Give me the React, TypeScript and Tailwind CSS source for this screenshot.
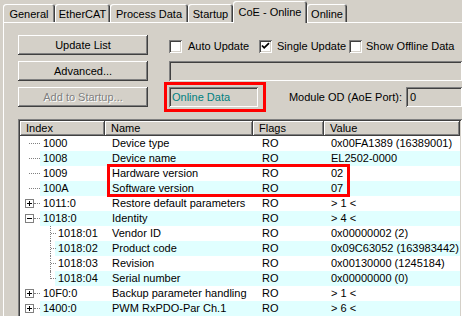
import React from 'react';

const sunken =
  'shadow-[inset_1px_1px_0_#808080,inset_-1px_-1px_0_#ffffff,inset_2px_2px_0_#404040,inset_-2px_-2px_0_#d4d0c8]';
const raised =
  'shadow-[inset_-1px_-1px_0_#404040,inset_1px_1px_0_#ffffff,inset_-2px_-2px_0_#808080]';

type Row = {
  idx: string;
  name: string;
  value: string;
  level?: number;
  box?: '+' | '-';
  last?: boolean;
};

const rows: Row[] = [
  { idx: '1000', name: 'Device type', value: '0x00FA1389 (16389001)' },
  { idx: '1008', name: 'Device name', value: 'EL2502-0000' },
  { idx: '1009', name: 'Hardware version', value: '02' },
  { idx: '100A', name: 'Software version', value: '07' },
  { idx: '1011:0', name: 'Restore default parameters', value: '> 1 <', box: '+' },
  { idx: '1018:0', name: 'Identity', value: '> 4 <', box: '-' },
  { idx: '1018:01', name: 'Vendor ID', value: '0x00000002 (2)', level: 1 },
  { idx: '1018:02', name: 'Product code', value: '0x09C63052 (163983442)', level: 1 },
  { idx: '1018:03', name: 'Revision', value: '0x00130000 (1245184)', level: 1 },
  { idx: '1018:04', name: 'Serial number', value: '0x00000000 (0)', level: 1, last: true },
  { idx: '10F0:0', name: 'Backup parameter handling', value: '> 1 <', box: '+' },
  { idx: '1400:0', name: 'PWM RxPDO-Par Ch.1', value: '> 6 <', box: '+' },
];

const tabs = [
  { label: 'General', w: 'w-[52px]' },
  { label: 'EtherCAT', w: 'w-[55px]' },
  { label: 'Process Data', w: 'w-[78px]' },
  { label: 'Startup', w: 'w-[45px]' },
  { label: 'CoE - Online', w: 'w-[74px]', active: true },
  { label: 'Online', w: 'w-[40px]' },
];

function Checkbox({ checked }: { checked?: boolean }) {
  return (
    <div className={`w-[13px] h-[13px] bg-white shrink-0 ${sunken}`}>
      {checked && (
        <svg width="13" height="13" viewBox="0 0 13 13">
          <path d="M3 5.5 L5.2 7.8 L10 3.2" fill="none" stroke="#000" strokeWidth="1.8" />
        </svg>
      )}
    </div>
  );
}

function Button({ label, disabled }: { label: string; disabled?: boolean }) {
  return (
    <div
      className={`w-[130px] h-[20px] flex items-center justify-center bg-[#d4d0c8] ${raised} ${
        disabled ? 'text-[#808080] [text-shadow:1px_1px_0_#ffffff]' : 'text-black'
      }`}
    >
      {label}
    </div>
  );
}

function TreeCell({ row }: { row: Row }) {
  if (row.level === 1) {
    return (
      <div className="relative w-[35px] h-full shrink-0">
        <span
          className={`absolute left-[30px] top-0 border-l border-dotted border-[#808080] ${
            row.last ? 'h-[8px]' : 'h-full'
          }`}
        />
        <span className="absolute left-[31px] top-[7px] w-[5px] border-t border-dotted border-[#808080]" />
      </div>
    );
  }
  return (
    <div className="relative w-[20px] h-full shrink-0">
      {row.box ? (
        <>
          <svg className="absolute left-[5px] top-[3px]" width="9" height="9" viewBox="0 0 9 9">
            <rect x="0.5" y="0.5" width="8" height="8" fill="#fff" stroke="#808080" />
            <path d="M2 4.5h5" stroke="#000" />
            {row.box === '+' && <path d="M4.5 2v5" stroke="#000" />}
          </svg>
          <span className="absolute left-[14px] top-[7px] w-[6px] border-t border-dotted border-[#808080]" />
        </>
      ) : (
        <span className="absolute left-[9px] top-[7px] w-[11px] border-t border-dotted border-[#808080]" />
      )}
    </div>
  );
}

export default function App() {
  return (
    <div className="relative w-[462px] h-[316px] overflow-hidden bg-[#d4d0c8] text-[11px] leading-none text-black font-['Liberation_Sans',Arial,sans-serif]">
      {/* Tabs */}
      <div className="flex items-end h-[22px] pl-[3px]">
        {tabs.map((t) =>
          t.active ? (
            <div
              key={t.label}
              className={`${t.w} h-[22px] -mb-[1px] relative z-10 bg-[#d4d0c8] rounded-t-[3px] flex items-start justify-center pt-[6px] shadow-[inset_1px_1px_0_#ffffff,inset_-1px_0_0_#404040,inset_-2px_0_0_#808080]`}
            >
              {t.label}
            </div>
          ) : (
            <div
              key={t.label}
              className={`${t.w} h-[18px] bg-[#d4d0c8] rounded-t-[3px] flex items-start justify-center pt-[5px] shadow-[inset_1px_1px_0_#ffffff,inset_-1px_0_0_#404040,inset_-2px_0_0_#808080]`}
            >
              {t.label}
            </div>
          )
        )}
      </div>

      {/* Panel */}
      <div className="ml-[3px] border-t border-l border-white pl-[14px] pt-[12px] h-[400px]">
        <div className="flex">
          <div className="flex flex-col gap-[6px]">
            <Button label="Update List" />
            <Button label="Advanced..." />
            <Button label="Add to Startup..." disabled />
          </div>

          <div className="ml-[21px] flex flex-col gap-[6px]">
            <div className="flex h-[20px] items-start pt-[5px]">
              <div className="w-[90px] flex items-center">
                <Checkbox />
                <span className="ml-[6px]">Auto Update</span>
              </div>
              <div className="w-[90px] flex items-center">
                <Checkbox checked />
                <span className="ml-[5px]">Single Update</span>
              </div>
              <div className="flex items-center">
                <Checkbox />
                <span className="ml-[4px] whitespace-nowrap">Show Offline Data</span>
              </div>
            </div>
            <div className={`w-[293px] h-[20px] ${sunken}`} />
            <div className="flex items-center h-[20px]">
              <div className={`w-[89px] h-[20px] flex items-center pl-[3px] text-[#008080] ${sunken}`}>
                Online Data
              </div>
              <div className="w-[148px] flex justify-end pr-[4px] whitespace-nowrap">
                Module OD (AoE Port):
              </div>
              <div className={`w-[56px] h-[20px] flex items-center pl-[4px] ${sunken}`}>0</div>
            </div>
          </div>
        </div>

        {/* Object list */}
        <div className={`mt-[12px] w-[444px] h-[220px] bg-white p-[2px] ${sunken}`}>
          <div className="flex h-[15px]">
            {[
              { l: 'Index', w: 'w-[85px]' },
              { l: 'Name', w: 'w-[148px]' },
              { l: 'Flags', w: 'w-[71px]' },
              { l: 'Value', w: 'flex-1' },
            ].map((h) => (
              <div
                key={h.l}
                className={`${h.w} h-full flex items-center pl-[6px] bg-[#d4d0c8] ${raised}`}
              >
                {h.l}
              </div>
            ))}
          </div>
          {rows.map((r, i) => (
            <div key={r.idx} className="flex h-[15px]">
              <TreeCell row={r} />
              <div className={`flex flex-1 h-full items-center ${i % 2 ? 'bg-[#e0ffff]' : ''}`}>
                <div className={`${r.level === 1 ? 'w-[50px]' : 'w-[65px]'} pl-[3px]`}>{r.idx}</div>
                <div className="w-[148px] pl-[7px] whitespace-nowrap overflow-hidden">{r.name}</div>
                <div className="w-[71px] pl-[9px]">RO</div>
                <div className="pl-[7px] whitespace-nowrap">{r.value}</div>
              </div>
            </div>
          ))}
        </div>
      </div>

      {/* Annotation frames */}
      <div className="absolute left-[164px] top-[82px] w-[102px] h-[30px] border-[3px] border-[#ff0000]" />
      <div className="absolute left-[107px] top-[164px] w-[243px] h-[33px] border-[3px] border-[#ff0000]" />
    </div>
  );
}
